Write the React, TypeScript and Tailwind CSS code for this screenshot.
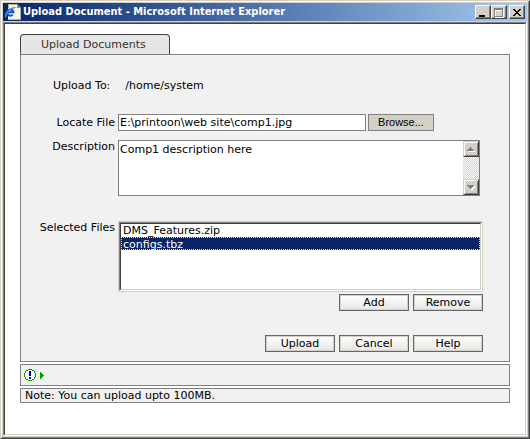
import type { ReactNode } from "react";

function PageIcon() {
  return (
    <svg width="16" height="16" viewBox="0 0 16 16" shapeRendering="crispEdges" aria-hidden="true">
      <path d="M3 0h9l4 4v12H3z" fill="#f7f5ea" />
      <path d="M12 0v4h4z" fill="#8a8a80" />
      <path d="M3 0h9v1H3zM3 0h1v4H3zM15 4h1v12H3v-1h12z" fill="#b5b19c" />
      <g shapeRendering="auto" fill="none">
        <path d="M2.4 8.3H8.4A3.1 3.1 0 1 0 7.7 10.6" stroke="#1450c8" strokeWidth="2.1" />
        <path d="M1.2 13.4C-1 10.5 4.4 3.9 10.4 3.4" stroke="#3f92ee" strokeWidth="1.4" />
      </g>
    </svg>
  );
}

function CaptionButton({ label, children }: { label: string; children: ReactNode }) {
  return (
    <button
      type="button"
      aria-label={label}
      className="flex h-3.5 w-4 items-center justify-center border border-t-white border-l-white border-r-[#404040] border-b-[#404040] bg-[#d4d0c8] shadow-[inset_-1px_-1px_0_#808080]"
    >
      {children}
    </button>
  );
}

function TitleBar() {
  return (
    <header className="flex h-[18px] items-center bg-linear-to-r from-[#0a246a] to-[#a6caf0] pr-0.5 pl-0.5">
      <PageIcon />
      <h1 className="min-w-0 flex-1 truncate pl-0.5 font-['DejaVu_Sans_Condensed','DejaVu_Sans',sans-serif] text-[11px] leading-4 font-bold text-white">
        Upload Document - Microsoft Internet Explorer
      </h1>
      <div className="flex">
        <CaptionButton label="Minimize">
          <svg width="12" height="11" shapeRendering="crispEdges">
            <path d="M2 8h6v2H2z" fill="#000" />
          </svg>
        </CaptionButton>
        <CaptionButton label="Maximize">
          <svg width="12" height="11" shapeRendering="crispEdges">
            <path d="M2 2h9v9H2z" fill="#fff" />
            <path d="M1 1h9v9H1z" fill="#808080" />
            <path d="M2 3h7v6H2z" fill="#fff" />
            <path d="M3 4h6v5H3z" fill="#d4d0c8" />
          </svg>
        </CaptionButton>
        <div className="ml-0.5 flex">
          <CaptionButton label="Close">
            <svg width="12" height="11" shapeRendering="crispEdges">
              <path
                d="M2 2h2v1H2zM8 2h2v1H8zM3 3h2v1H3zM7 3h2v1H7zM4 4h4v1H4zM5 5h2v1H5zM4 6h4v1H4zM3 7h2v1H3zM7 7h2v1H7zM2 8h2v1H2zM8 8h2v1H8z"
                fill="#000"
              />
            </svg>
          </CaptionButton>
        </div>
      </div>
    </header>
  );
}

function FormButton({ children }: { children: ReactNode }) {
  return (
    <button
      type="button"
      className="h-[17px] w-[70px] border border-[#666] bg-linear-to-b from-white to-[#e6e6e6] text-center leading-[13px] shadow-[inset_0_0_0_1px_#d4d0c8]"
    >
      {children}
    </button>
  );
}

function ScrollButton({ label, up }: { label: string; up?: boolean }) {
  return (
    <button
      type="button"
      aria-label={label}
      className="flex size-4 items-center justify-center border border-t-[#d4d0c8] border-l-[#d4d0c8] border-r-[#404040] border-b-[#404040] bg-[#d4d0c8] shadow-[inset_1px_1px_0_#fff,inset_-1px_-1px_0_#808080]"
    >
      <svg width="8" height="6" shapeRendering="crispEdges">
        {up ? (
          <>
            <path d="M1 5h7v1H1z" fill="#fff" />
            <path d="M3 1h1v1H3zM2 2h3v1H2zM1 3h5v1H1zM0 4h7v1H0z" fill="#808080" />
          </>
        ) : (
          <>
            <path d="M7 2h1v1H7zM6 3h2v1H6zM5 4h2v1H5zM4 5h2v1H4z" fill="#fff" />
            <path d="M0 1h7v1H0zM1 2h5v1H1zM2 3h3v1H2zM3 4h1v1H3z" fill="#808080" />
          </>
        )}
      </svg>
    </button>
  );
}

const labelClass = "w-[94px] shrink-0 text-right leading-[14px]";

export default function App() {
  return (
    <div className="border border-t-[#d4d0c8] border-r-[#404040] border-b-[#404040] border-l-[#d4d0c8] font-['DejaVu_Sans',Verdana,sans-serif] text-[11px] text-black">
      <div className="border border-t-white border-r-[#808080] border-b-[#808080] border-l-white bg-[#d4d0c8] p-px">
        <TitleBar />
        <div className="mt-px border border-t-[#808080] border-r-white border-b-white border-l-[#808080]">
          <main className="border border-t-[#404040] border-r-[#d4d0c8] border-b-[#d4d0c8] border-l-[#404040] bg-white px-[15px] pt-2.5 pb-[31px]">
            <h2 className="h-5 w-[150px] rounded-t-[4px] border border-b-0 border-[#404040] bg-[#e6e6e6] pl-5 leading-[19px] text-[#333]">
              Upload Documents
            </h2>
            <form className="border border-[#808080] bg-[#f1f1f1] pt-6 pr-[26px] pb-[9px]">
              <p className="flex gap-[15px] pl-8 leading-[14px]">
                <span>Upload To:</span>
                <span>/home/system</span>
              </p>
              <div className="mt-[21px] flex gap-[3px]">
                <label htmlFor="file" className={`${labelClass} pt-0.5`}>
                  Locate File
                </label>
                <div className="flex gap-0.5">
                  <input
                    id="file"
                    type="text"
                    defaultValue="E:\printoon\web site\comp1.jpg"
                    className="h-[17px] w-[248px] border border-[#808080] bg-white px-px leading-[15px] outline-none"
                  />
                  <button
                    type="button"
                    className="h-[17px] w-[66px] border border-[#808080] bg-[#d4d0c8] font-['Liberation_Sans',Arial,sans-serif] leading-[15px]"
                  >
                    Browse...
                  </button>
                </div>
              </div>
              <div className="mt-[9px] flex gap-[3px]">
                <label htmlFor="description" className={labelClass}>
                  Description
                </label>
                <div className="mr-[3px] flex h-14 flex-1 border border-[#808080] bg-white">
                  <textarea
                    id="description"
                    defaultValue="Comp1 description here"
                    className="min-w-0 flex-1 resize-none overflow-hidden px-px pt-0.5 leading-[13px] outline-none"
                  />
                  <div className="flex w-4 flex-col justify-between bg-[repeating-conic-gradient(#d4d0c8_0_25%,#fff_0_50%)] bg-size-[2px_2px]">
                    <ScrollButton label="Scroll up" up />
                    <ScrollButton label="Scroll down" />
                  </div>
                </div>
              </div>
              <div className="mt-[25px] flex gap-[3px]">
                <label htmlFor="selected" className={labelClass}>
                  Selected Files
                </label>
                <div className="flex-1 border border-[#d4d0c8]">
                  <div className="border border-t-[#808080] border-r-white border-b-white border-l-[#808080]">
                    <select
                      id="selected"
                      size={5}
                      defaultValue="configs.tbz"
                      className="block h-[67px] w-full appearance-none overflow-hidden rounded-none border border-t-[#404040] border-r-[#d4d0c8] border-b-[#d4d0c8] border-l-[#404040] bg-white p-0 outline-none"
                    >
                      <option className="h-[13px] min-h-0 px-0.5 py-0 leading-[13px]">DMS_Features.zip</option>
                      <option className="h-[13px] min-h-0 border border-dotted border-[#f5db95] bg-linear-to-r from-[#0a246a] to-[#0a246a] px-px py-0 leading-[11px] [-webkit-text-fill-color:#fff]">
                        configs.tbz
                      </option>
                    </select>
                  </div>
                </div>
              </div>
              <div className="mt-0.5 flex justify-end gap-1">
                <FormButton>Add</FormButton>
                <FormButton>Remove</FormButton>
              </div>
              <div className="mt-6 flex justify-end gap-1">
                <FormButton>Upload</FormButton>
                <FormButton>Cancel</FormButton>
                <FormButton>Help</FormButton>
              </div>
            </form>
            <div className="mt-0.5 flex h-[22px] items-center gap-1 border border-[#808080] bg-[#f1f1f1] pl-[3px]">
              <svg width="12" height="12" viewBox="0 0 12 12" shapeRendering="crispEdges" aria-hidden="true">
                <path d="M4 1h4v1h2v2h1v4h-1v2H8v1H4v-1H2V8H1V4h1V2h2z" fill="#fff" />
                <path
                  d="M4 0h4v1H4zM2 1h2v1H2zM8 1h2v1H8zM1 2h1v2H1zM10 2h1v2h-1zM0 4h1v4H0zM11 4h1v4h-1zM1 8h1v2H1zM10 8h1v2h-1zM2 10h2v1H2zM8 10h2v1H8zM4 11h4v1H4z"
                  fill="#009900"
                />
                <path d="M5 2h2v5H5zM5 8h2v2H5z" fill="#0000cc" />
              </svg>
              <svg width="4" height="7" viewBox="0 0 4 7" shapeRendering="crispEdges" aria-hidden="true">
                <path d="M0 0h1v1h1v1h1v1h1v1H3v1H2v1H1v1H0z" fill="#009900" />
              </svg>
            </div>
            <p className="mt-0.5 h-[15px] border border-[#808080] bg-[#f1f1f1] pl-1 leading-[14px]">
              Note: You can upload upto 100MB.
            </p>
          </main>
        </div>
      </div>
    </div>
  );
}
